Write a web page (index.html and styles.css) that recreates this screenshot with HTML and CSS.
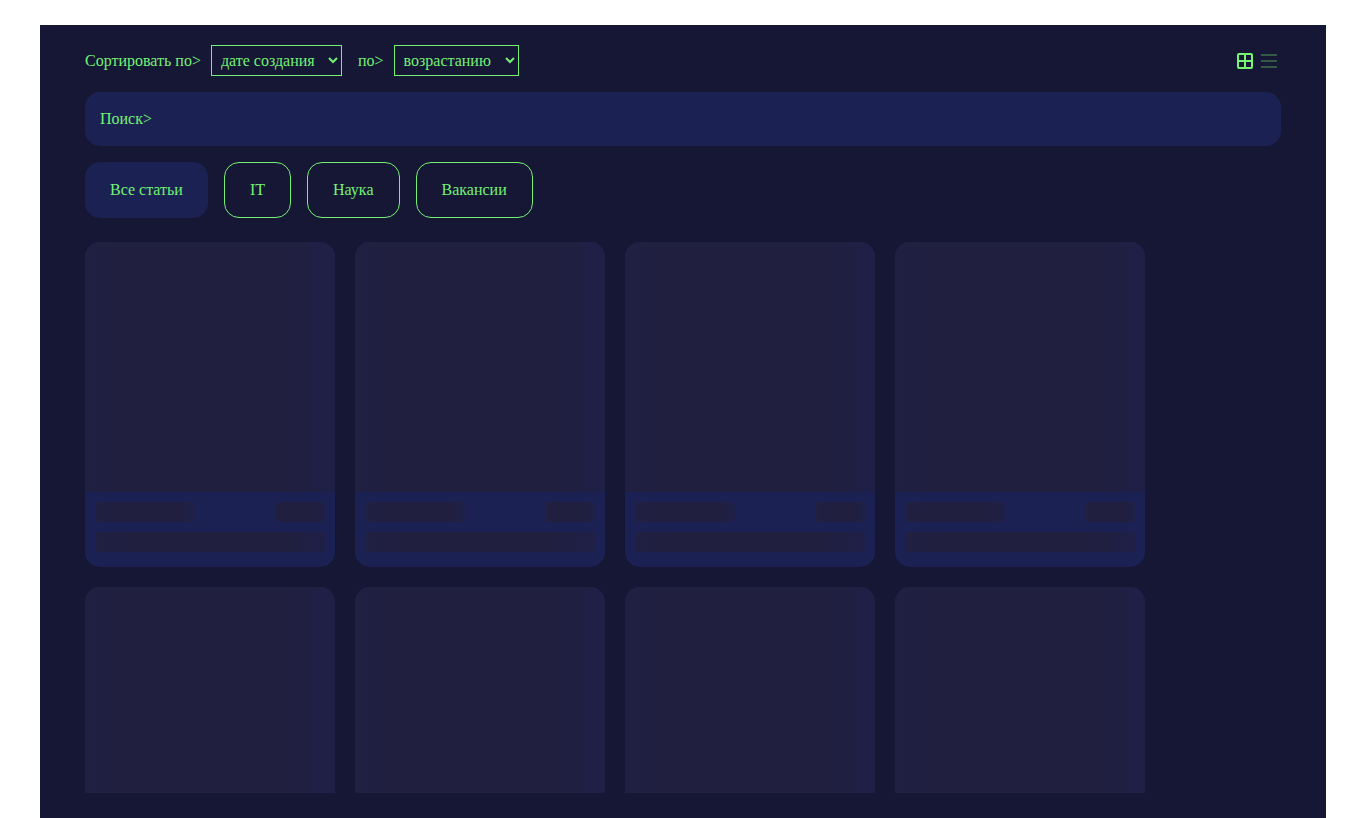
FILE: index.html
```html
<!DOCTYPE html>
<html lang="ru">
<head>
<meta charset="UTF-8">
<title>Статьи</title>
<link rel="stylesheet" href="styles.css">
</head>
<body>
<main class="page">
  <div class="toolbar">
    <div class="sort">
      <label class="field"><span>Сортировать по&gt;</span>
        <select class="select select-date"><option>дате создания</option><option>названию</option><option>просмотрам</option></select></label>
      <label class="field"><span>по&gt;</span>
        <select class="select select-order"><option>возрастанию</option><option>убыванию</option></select></label>
    </div>
    <div class="views">
      <svg class="icon" viewBox="0 0 24 24"><rect x="5" y="5" width="14" height="14" rx="1"/><path d="M12 5v14M5 12h14"/></svg>
      <svg class="icon inactive" viewBox="0 0 24 24"><path d="M4 6h16M4 12h16M4 18h16"/></svg>
    </div>
  </div>
  <div class="search"><span>Поиск&gt;</span><input class="search-input" type="text" aria-label="Поиск"></div>
  <div class="tabs">
    <div class="tab active">Все статьи</div>
    <div class="tab">IT</div>
    <div class="tab">Наука</div>
    <div class="tab">Вакансии</div>
  </div>
  <div class="list">
    <div class="card"><div class="bone image"></div><div class="info"><div class="row"><div class="bone type"></div><div class="bone count"></div></div><div class="bone title"></div></div></div>
    <div class="card"><div class="bone image"></div><div class="info"><div class="row"><div class="bone type"></div><div class="bone count"></div></div><div class="bone title"></div></div></div>
    <div class="card"><div class="bone image"></div><div class="info"><div class="row"><div class="bone type"></div><div class="bone count"></div></div><div class="bone title"></div></div></div>
    <div class="card"><div class="bone image"></div><div class="info"><div class="row"><div class="bone type"></div><div class="bone count"></div></div><div class="bone title"></div></div></div>
    <div class="card"><div class="bone image"></div></div>
    <div class="card"><div class="bone image"></div></div>
    <div class="card"><div class="bone image"></div></div>
    <div class="card"><div class="bone image"></div></div>
  </div>
</main>
</body>
</html>
```
FILE: styles.css
```css
* { box-sizing: border-box; }
body {
  margin: 0;
  height: 818px;
  overflow: hidden;
  padding: 25px 40px 0;
  background: #fff;
  color: #74f174;
  font: 16px/24px "Liberation Serif", "Times New Roman", serif;
}
.page {
  height: 793px;
  padding: 20px 45px 25px;
  background: #161735;
  display: flex;
  flex-direction: column;
}
.toolbar {
  flex: none;
  height: 31px;
  display: flex;
  justify-content: space-between;
  align-items: center;
}
.sort { display: flex; gap: 16px; }
.field { display: flex; align-items: center; gap: 10px; }
.select {
  height: 31px;
  padding: 5px;
  border: 1px solid #74f174;
  border-radius: 0;
  background: transparent;
  color: #74f174;
  font: 16px "Liberation Serif", "Times New Roman", serif;
  outline: none;
}
.select-date { width: 131px; }
.select-order { width: 125px; }
.views { display: flex; }
.icon { width: 24px; height: 24px; fill: none; stroke: #76f570; stroke-width: 2; }
.inactive { opacity: .3; }
.search {
  flex: none;
  height: 54px;
  margin-top: 16px;
  padding: 0 15px;
  border-radius: 15px;
  background: #1b2152;
  display: flex;
  align-items: center;
  gap: 5px;
}
.search-input {
  flex: 1;
  border: 0;
  outline: none;
  background: transparent;
  color: inherit;
  font: inherit;
}
.tabs { flex: none; display: flex; gap: 16px; margin: 16px 0 24px; }
.tab {
  height: 56px;
  padding: 0 25px;
  border: 1px solid #74f174;
  border-radius: 15px;
  line-height: 54px;
}
.tab.active { border: 0; background: #1b2152; line-height: 56px; }
.list {
  flex: 1;
  min-height: 0;
  overflow: hidden;
  display: grid;
  grid-template-columns: repeat(4, 250px);
  grid-auto-rows: 325px;
  gap: 20px;
}
.card { border-radius: 15px; overflow: hidden; background: #1b2152; }
.bone {
  height: 20px;
  border-radius: 4px;
  background: linear-gradient(90deg, #202042 0, #201f40 15%, #201f40 84%, #1f2047 96%, #202046 100%);
}
.bone.image { height: 250px; border-radius: 0; }
.info { padding: 10px; display: flex; flex-direction: column; gap: 10px; }
.row { display: flex; justify-content: space-between; }
.type { width: 100px; }
.count { width: 50px; }
```
